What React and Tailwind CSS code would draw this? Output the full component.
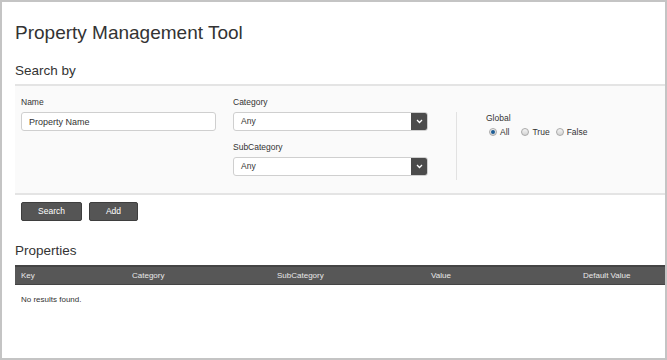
import React from 'react';

const Radio = ({ checked, label }) => (
  <label className="flex items-center gap-[3px]">
    <span className="w-[8px] h-[8px] rounded-full border border-[#a9a9a9] bg-gradient-to-b from-[#f4f4f4] to-[#d4d4d4] flex items-center justify-center">
      {checked && <span className="w-[4px] h-[4px] rounded-full bg-[#1d5d95]" />}
    </span>
    <span>{label}</span>
  </label>
);

const SelectBox = ({ value }) => (
  <div className="w-[195px] h-[19px] flex items-center bg-white border border-[#cfcfcf] rounded-[3px] overflow-hidden">
    <span className="flex-1 pl-[7px]">{value}</span>
    <span className="w-[16px] h-full bg-[#4b4b4b] flex items-center justify-center">
      <svg width="7" height="5" viewBox="0 0 7 5">
        <path d="M1 1 L3.5 3.5 L6 1" stroke="#ffffff" strokeWidth="1.3" fill="none" />
      </svg>
    </span>
  </div>
);

const columns = [
  { label: 'Key', w: 'w-[111px]' },
  { label: 'Category', w: 'w-[145px]' },
  { label: 'SubCategory', w: 'w-[154px]' },
  { label: 'Value', w: 'w-[152px]' },
  { label: 'Default Value', w: 'flex-1' },
];

export default function App() {
  return (
    <div className="w-[667px] h-[360px] border-2 border-[#c4c4c4] bg-white text-[#333] font-['Liberation_Sans',Arial,sans-serif] overflow-hidden">
      {/* Titulo */}
      <h1 className="pl-[13px] pt-[20px] text-[19px] leading-[22px]">Property Management Tool</h1>
      <h2 className="pl-[13px] mt-[19px] text-[13.5px] leading-[16px]">Search by</h2>

      {/* Panel de busqueda */}
      <div className="ml-[13px] mt-[5px] bg-[#fafafa] border-t-2 border-b-2 border-[#e4e4e4] pl-[6px] pt-[11px] pb-[13px] flex text-[8.5px]">
        <div className="w-[195px]">
          <div className="leading-[10px]">Name</div>
          <input
            className="mt-[5px] w-[195px] h-[19px] bg-white border border-[#cfcfcf] rounded-[3px] pl-[7px] outline-none text-[#333] text-[9px]"
            defaultValue="Property Name"
          />
        </div>
        <div className="ml-[17px] w-[195px]">
          <div className="leading-[10px]">Category</div>
          <div className="mt-[5px]">
            <SelectBox value="Any" />
          </div>
          <div className="mt-[11px] leading-[10px]">SubCategory</div>
          <div className="mt-[5px]">
            <SelectBox value="Any" />
          </div>
        </div>
        <div className="ml-[28px] mt-[15px] w-px h-[68px] bg-[#e2e2e2]" />
        <div className="ml-[29px] mt-[16px]">
          <div className="leading-[10px]">Global</div>
          <div className="mt-[3px] flex items-center">
            <span className="ml-[3px]">
              <Radio checked label="All" />
            </span>
            <span className="ml-[12px]">
              <Radio label="True" />
            </span>
            <span className="ml-[6px]">
              <Radio label="False" />
            </span>
          </div>
        </div>
      </div>

      {/* Botones */}
      <div className="ml-[19px] mt-[7px] flex gap-[7px] text-[8.5px] text-white">
        <button className="w-[61px] h-[19px] bg-[#555] border border-[#3e3e3e] rounded-[2px]">Search</button>
        <button className="w-[49px] h-[19px] bg-[#555] border border-[#3e3e3e] rounded-[2px]">Add</button>
      </div>

      <h2 className="pl-[13px] mt-[22px] text-[13.5px] leading-[16px]">Properties</h2>

      {/* Tabla */}
      <div className="ml-[13px] mt-[6px]">
        <div className="h-[20px] flex items-center bg-[#575757] border-t-2 border-b border-[#444] text-[8px] text-[#e8e8e8]">
          {columns.map((c) => (
            <div key={c.label} className={`${c.w} pl-[6px]`}>
              {c.label}
            </div>
          ))}
        </div>
        <div className="pl-[6px] mt-[10px] text-[8px] leading-[10px]">No results found.</div>
      </div>
    </div>
  );
}
